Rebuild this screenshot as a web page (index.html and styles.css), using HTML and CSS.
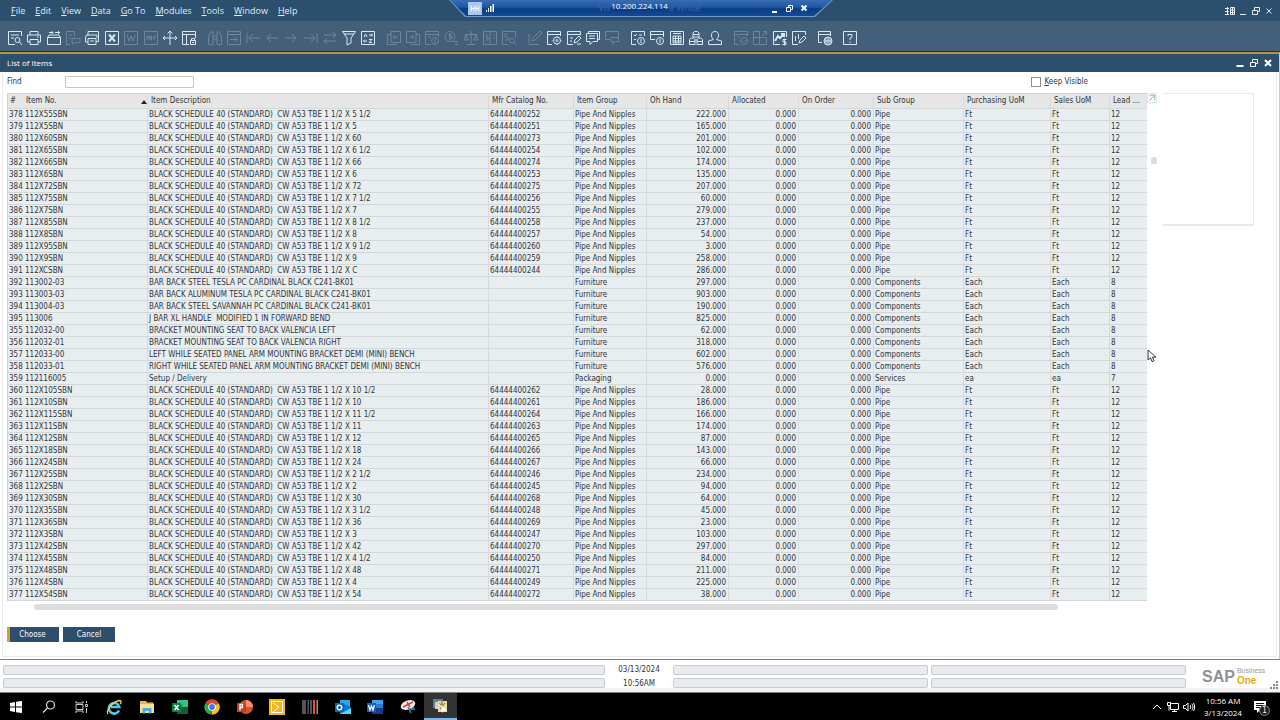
FILE: index.html
```html
<!DOCTYPE html>
<html lang="en">
<head>
<meta charset="utf-8">
<title>SAP Business One - List of Items</title>
<link rel="stylesheet" href="styles.css">
</head>
<body>
<div class="desktop">
  <header class="menubar">
    <nav class="menus">
      <button><u>F</u>ile</button><button><u>E</u>dit</button><button><u>V</u>iew</button><button><u>D</u>ata</button><button><u>G</u>o To</button><button><u>M</u>odules</button><button><u>T</u>ools</button><button><u>W</u>indow</button><button><u>H</u>elp</button>
    </nav>
    <div class="win-controls">
      <button aria-label="Layout"><svg viewBox="0 0 10 10"><path d="M0 2.500h4M0 5.500h4M0 8.500h4M2.500 1v8M5.500 1.500h4v7h-4zM5.500 4h4M5.500 6.500h4M7.500 1.500v7" /></svg></button>
      <button aria-label="Minimize"><svg viewBox="0 0 10 10"><path d="M2 8.500h6"/></svg></button>
      <button aria-label="Restore"><svg viewBox="0 0 10 10"><path d="M1.500 4.500h5v4h-5zM3.500 4V1.500h5v4H7"/></svg></button>
      <button aria-label="Close"><svg viewBox="0 0 10 10"><path d="M2.500 2.500l5 5M7.500 2.500l-5 5"/></svg></button>
    </div>
  </header>

  <div class="remote-bar">
    <div class="remote-shape">
      <span class="remote-pin"><svg viewBox="0 0 14 14"><path d="M3 4v6M3 7h3M6 5v4M8 4v6M8 7h3M11 4v6"/></svg></span>
      <svg class="signal" viewBox="0 0 8 8"><path d="M0 6h1v2H0zM2 4h1v4H2zM4 2h1.500v6H4zM6.500 0H8v8H6.500z"/></svg>
      <span class="remote-title"><span class="remote-ghost left">Vis</span><span class="remote-ip">10.200.224.114</span><span class="remote-ghost">e White</span></span>
      <span class="win-controls remote-controls">
        <button aria-label="Minimize session"><svg viewBox="0 0 10 10"><path class="bold" d="M3 9h5"/></svg></button>
        <button aria-label="Restore session"><svg viewBox="0 0 10 10"><path d="M2.500 4.500h4v4h-4zM4.500 4V2.500h4v4H7"/></svg></button>
        <button aria-label="Close session"><svg viewBox="0 0 10 10"><path class="bold" d="M2.500 2.500l5 5M7.500 2.500l-5 5"/></svg></button>
      </span>
    </div>
  </div>

  <div class="toolbar">
    <div class="tools g10">
      <button aria-label="Preview"><svg viewBox="0 0 16 16"><path d="M14.500 6V1.500h-13v13H8M4 5h8M4 8h3"/><circle cx="10.500" cy="10" r="2.500"/><path d="M12.500 12l2.500 3"/></svg></button>
      <button aria-label="Print"><svg viewBox="0 0 16 16"><path d="M4 5V1.500h8V5M4 12H1.500V5h13v7H12M4 9.500h8v5H4zM11 7h1.500"/></svg></button>
      <button aria-label="Send"><svg viewBox="0 0 16 16"><path d="M1.500 7.500h13v7h-13zM1.500 7.500L3 5h10l1.500 2.500M3 2.500h4M9 2.500h5M5.500 1L7 2.500 5.500 4M12 1l1.500 1.500L12 4"/></svg></button>
      <button disabled aria-label="Copy"><svg viewBox="0 0 16 16"><path d="M5 14.500H1.500v-13h8V6M4 5h3M4 8h2M7 8.500h8v4h-5l-2 2v-2H7z"/></svg></button>
      <button aria-label="Fax"><svg viewBox="0 0 16 16"><path d="M4 5V1.500h10.500v10H12M3 5h10v3M3 4.500L1.500 7v5H4M4 8.500h8v6H4zM6 11h4"/></svg></button>
      <button aria-label="Excel"><svg viewBox="0 0 16 16"><path d="M1.500 1.500h13v13h-13z"/><path class="bold" d="M5 4.500l6 7M11 4.500l-6 7"/></svg></button>
      <button disabled aria-label="Word"><svg viewBox="0 0 16 16"><path d="M1.500 1.500h13v13h-13z"/><path d="M4 5l2 6 2-5 2 5 2-6"/></svg></button>
      <button disabled aria-label="PDF"><svg viewBox="0 0 16 16"><path d="M1.500 1.500h13v13h-13zM4 10V6h1.500v2H4M7 6h1.500v4H7zM11 10V6h2M11 8h1.500"/></svg></button>
      <button aria-label="Launch"><svg viewBox="0 0 16 16"><path d="M8 1v14M1 8h14M5.500 3.500L8 1l2.500 2.500M3 6L1 8l2 2M13 6l2 2-2 2"/></svg></button>
      <button aria-label="Lock screen"><svg viewBox="0 0 16 16"><path d="M8 14.500H1.500v-13h13V8M1.500 4.500h13M5.500 4.500v10M9.500 10.500h5v4h-5zM10.500 10V8.500h3V10M11 12.500h2"/></svg></button>
    </div>
    <div class="tools g9">
      <button disabled aria-label="Find"><svg viewBox="0 0 16 16"><path d="M1.500 7l2-5h2.500v12.500H1.500zM14.500 7l-2-5H10v12.500h4.500zM6 6h4M6 9h4"/></svg></button>
      <button disabled aria-label="Add"><svg viewBox="0 0 16 16"><path d="M1.500 1.500h13v13h-13zM1.500 4.500h13M4 9.500h7M8.500 7L11 9.500 8.500 12"/></svg></button>
      <button disabled aria-label="First"><svg viewBox="0 0 16 16"><path d="M2 3v10M15 8H4M8 4L4 8l4 4"/></svg></button>
      <button disabled aria-label="Previous"><svg viewBox="0 0 16 16"><path d="M14 8H3M7 4L3 8l4 4"/></svg></button>
      <button disabled aria-label="Next"><svg viewBox="0 0 16 16"><path d="M2 8h11M9 4l4 4-4 4"/></svg></button>
      <button disabled aria-label="Last"><svg viewBox="0 0 16 16"><path d="M14 3v10M1 8h11M8 4l4 4-4 4"/></svg></button>
      <button disabled aria-label="Refresh"><svg viewBox="0 0 16 16"><path d="M2 5h12M11 2l3 3-3 3M14 11H2M5 8l-3 3 3 3"/></svg></button>
      <button aria-label="Filter"><svg viewBox="0 0 16 16"><path d="M1.500 1.500h13L10 8v5l-4 2V8zM3 4h10"/></svg></button>
      <button aria-label="Sort"><svg viewBox="0 0 16 16"><path d="M1.500 1.500h13v13h-13z"/><path d="M4 7l1.500-3L7 7M9 5h3.500M11 4l1.500 1L11 6.500M7 11H3.500M5 9.500L3.500 11 5 12.500M9 9.500h3l-3 3h3"/></svg></button>
    </div>
    <div class="tools g7">
      <button disabled aria-label="Base document"><svg viewBox="0 0 16 16"><path d="M5 1.500h9.500v11H5zM5 4.500H1.500v10H11M12 7H7M9 5L7 7l2 2"/></svg></button>
      <button disabled aria-label="Target document"><svg viewBox="0 0 16 16"><path d="M1.500 1.500H11v11H1.500zM11 4.500h3.500v10H5M4 7h5M7 5l2 2-2 2"/></svg></button>
      <button disabled aria-label="Gross profit"><svg viewBox="0 0 16 16"><path d="M7 14.500H1.500v-13h13V7M1.500 4.500h13M4 7h3"/><circle cx="11" cy="11" r="3.500"/><path d="M11 9v4"/></svg></button>
      <button disabled aria-label="Payment means"><svg viewBox="0 0 16 16"><circle cx="7" cy="6.500" r="5"/><path d="M9 4.500H6v2h3v2H6M7 3v7M10 11.500h5M12 14.500h3"/></svg></button>
      <button disabled aria-label="Volume and weight"><svg viewBox="0 0 16 16"><path d="M8 1v13M4 14.500h8M2 4.500h12M3 4.500L1 10h4zM13 4.500L11 10h4z"/></svg></button>
      <button disabled aria-label="Journal"><svg viewBox="0 0 16 16"><path d="M1.500 1.500h13v13h-13zM8 1.500v13M6 5H4v2.500h2V10H4M11 5h2M11 8h2"/></svg></button>
      <button disabled aria-label="Cost search"><svg viewBox="0 0 16 16"><path d="M7 14.500H1.500v-13h13V7M7 4H4v3h3v3H4"/><circle cx="11" cy="10.500" r="2.500"/><path d="M13 12.500l2 2.500"/></svg></button>
    </div>
    <div class="tools g5">
      <button disabled aria-label="Edit"><svg viewBox="0 0 16 16"><path d="M2 4v10.500h10M5 11l1-3 7-7 2 2-7 7z"/></svg></button>
      <button aria-label="Form settings"><svg viewBox="0 0 16 16"><path d="M6 14.500H1.500v-13h13V6M1.500 4.500h13"/><circle cx="11" cy="10.500" r="3.500"/><circle cx="11" cy="10.500" r="1"/><path d="M11 6v1M11 14v1M6.500 10.500h1M14.500 10.500h1"/></svg></button>
      <button aria-label="Layout designer"><svg viewBox="0 0 16 16"><path d="M7 14.500H1.500v-13h13V5M1.500 4.500h13M4 8h3M4 11h2M8 13l1-3 4-4 2 2-4 4zM11 14h4"/></svg></button>
      <button aria-label="Messages"><svg viewBox="0 0 16 16"><path d="M3.500 3.500V1.500h11v8H13M1.500 3.500h11v8H8l-3 3v-3H1.500zM4 6h6M4 8.500h6"/></svg></button>
      <button disabled aria-label="Replies"><svg viewBox="0 0 16 16"><path d="M6 9.500H1.500v-8h13v6M7 7.500h7.500v4H11l-2 3v-3H7z"/></svg></button>
    </div>
    <div class="tools g5">
      <button aria-label="Alerts"><svg viewBox="0 0 16 16"><path d="M6 14.500H1.500v-13h13V6M4 5l1 1 2-2M9 5h3M4 9l1 1 1-1"/><circle cx="11" cy="11" r="3.500"/><path d="M11 9v4"/></svg></button>
      <button aria-label="Information"><svg viewBox="0 0 16 16"><path d="M6 9.500H1.500v-8h13V7M1.500 4.500h13"/><circle cx="11" cy="11" r="3.500"/><path d="M11 9v4"/></svg></button>
      <button aria-label="Calculator"><svg viewBox="0 0 16 16"><path d="M1.500 1.500h13v13h-13zM4 3.500h8M4 6h8v7H4zM6.500 6v7M9.500 6v7M4 8.500h8M4 11h8"/></svg></button>
      <button aria-label="Relationship map"><svg viewBox="0 0 16 16"><path d="M5 7V3l1.500-1.500h3L11 3v4zM1.500 14.500v-5L3 8h2.500L7 9.500v5zM9 14.500v-5L10.500 8H13l1.500 1.500v5zM5 4.500h6M1.500 11.500H7M9 11.500h5.500M7 10h2"/></svg></button>
      <button aria-label="User"><svg viewBox="0 0 16 16"><path d="M8 1.500c5 0 4 6 1.500 8l5 1.500v3.500h-13V11l5-1.500C4 7.500 3 1.500 8 1.500z"/></svg></button>
    </div>
    <div class="tools g4">
      <button disabled aria-label="Schedule"><svg viewBox="0 0 16 16"><path d="M6 14.500H1.500v-13h13V6M1.500 4.500h13M4 7h3"/><circle cx="11" cy="11" r="3.500"/><path d="M9.500 11l1.500 1 2-2"/></svg></button>
      <button disabled aria-label="Widgets"><svg viewBox="0 0 16 16"><path d="M7.500 1.500h-6v13h13v-6M1.500 7.500h13M7.500 1.500v13M10 6l5-5M11 1.500h3.500V5"/></svg></button>
      <button aria-label="Sales analysis"><svg viewBox="0 0 16 16"><path d="M8 14.500H1.500v-13h13V7"/><path class="bold" d="M3 11l3-5 2 2 4-4M9 4h3v3"/><path d="M14.500 9.500H11V12h3v2.500h-3.500M12.500 8.500v7"/></svg></button>
      <button aria-label="Chart editor"><svg viewBox="0 0 16 16"><path d="M7 14.500H1.500v-13h13V5M4.500 6v5M7.500 4v5M8 13l1-3 4-4 2 2-4 4z"/></svg></button>
    </div>
    <div class="tools g1">
      <button aria-label="Browser"><svg viewBox="0 0 16 16"><path d="M5 12.500H1.500v-11h12V6M1.500 4.500h12"/><circle cx="11" cy="11" r="4"/><path d="M7 11h8M11 7v8M9 7.500v7M13 7.500v7"/></svg></button>
    </div>
    <div class="tools g1">
      <button aria-label="Help"><svg viewBox="0 0 16 16"><path d="M1.500 1.500h13v13h-13zM6 6V4.500h4V7L8 8v2M8 11.500V13"/></svg></button>
    </div>
  </div>

  <main class="window">
    <div class="titlebar">
      <h1>List of Items</h1>
      <div class="win-controls">
        <button aria-label="Minimize window"><svg viewBox="0 0 10 10"><path class="bold" d="M1.500 8h7"/></svg></button>
        <button aria-label="Restore window"><svg viewBox="0 0 10 10"><path d="M1.500 4.500h5v4h-5zM3.500 4V1.500h5v4H7"/></svg></button>
        <button aria-label="Close window"><svg viewBox="0 0 10 10"><path class="bold" d="M2 2l6 6M8 2L2 8"/></svg></button>
      </div>
    </div>
    <div class="content">
      <div class="find-row">
        <label for="find">Find</label>
        <input id="find" class="find-box" type="text">
        <label class="keep"><input type="checkbox"><span><u>K</u>eep Visible</span></label>
      </div>
      <div class="list-area">
        <div class="grid-wrap">
          <table class="items">
            <colgroup><col class="c-num"><col class="c-no"><col class="c-desc"><col class="c-mfr"><col class="c-group"><col class="c-hand"><col class="c-alloc"><col class="c-order"><col class="c-sub"><col class="c-purch"><col class="c-sales"><col class="c-lead"></colgroup>
            <thead><tr><th>#</th><th class="sorted">Item No.</th><th>Item Description</th><th>Mfr Catalog No.</th><th>Item Group</th><th>Oh Hand</th><th>Allocated</th><th>On Order</th><th>Sub Group</th><th>Purchasing UoM</th><th>Sales UoM</th><th>Lead ...</th></tr></thead>
            <tbody id="rows"></tbody>
          </table>
          <div class="hscroll"><div class="hthumb"></div></div>
        </div>
        <div class="side">
          <div class="side-tools">
            <button class="expand" aria-label="Expand"><svg viewBox="0 0 10 10"><path d="M2 1.500h6.500V8M8.500 1.500L1.500 8.500"/></svg></button>
            <div class="vthumb"></div>
          </div>
          <div class="side-panel"></div>
        </div>
      </div>
      <div class="actions">
        <button class="action primary">Choose</button><button class="action">Cancel</button>
      </div>
    </div>
  </main>

  <footer class="status">
    <div class="fields wide"><div></div><div></div></div>
    <div class="clock"><span>03/13/2024</span><span>10:56AM</span></div>
    <div class="fields"><div></div><div></div></div>
    <div class="fields"><div></div><div></div></div>
    <div class="brand"><span class="sap">SAP</span><span class="b1"><span class="biz">Business</span><span class="one">One</span></span></div>
    <svg class="grip" viewBox="0 0 8 8"><path d="M6 0h2v2H6zM3 3h2v2H3zM6 3h2v2H6zM0 6h2v2H0zM3 6h2v2H3zM6 6h2v2H6z"/></svg>
  </footer>

  <div class="taskbar">
    <div class="apps">
      <button aria-label="Start"><svg viewBox="0 0 16 16"><path fill="#fff" d="M2 4l5-1v4.500H2zM8 2.800L14 2v5.500H8zM2 8.500h5V13l-5-1zM8 8.500h6V14l-6-.8z"/></svg></button>
      <button aria-label="Search"><svg viewBox="0 0 16 16" fill="none" stroke="#ddd" stroke-width="1.200"><circle cx="9.500" cy="6" r="4"/><path d="M6.500 9L2 13.500"/></svg></button>
      <button aria-label="Task view"><svg viewBox="0 0 16 16" fill="none" stroke="#ccc"><path d="M2 5.500h7v5H2zM2 2v2h7V2M2 14v-2h7v2M12.500 2v2M12.500 9v5M11.500 5.500h2v2h-2z"/></svg></button>
      <button aria-label="Internet Explorer"><svg viewBox="0 0 16 16" fill="none"><path d="M13 11.500A5.300 5.300 0 1 1 13.300 8H5" stroke="#55c4ee" stroke-width="2.600"/><path d="M2 15C-.5 12 7 2 14 1.500c2 .5 1 2.500 0 3.500" stroke="#f2cf4a" stroke-width="1.300"/></svg></button>
      <button aria-label="File Explorer"><svg viewBox="0 0 16 16"><path fill="#e8b93c" d="M1 2h6l1 1.500h6.500V7H1z"/><path fill="#fbe08a" d="M1 5h14v9H1z"/><path fill="#48aee5" d="M3.500 9h9v5.500H10V12H6v2.500H3.500z"/></svg></button>
      <button aria-label="Excel app"><svg viewBox="0 0 16 16"><path fill="#33c481" d="M5 1h11v14H5z"/><path fill="#21a366" d="M5 5h6v5H5z"/><path fill="#185c37" d="M9 8h7v7H5v-4z"/><path fill="#107c41" d="M0 4h9v9H0z"/><path stroke="#fff" stroke-width="1.500" d="M2.500 6l4 5M6.500 6l-4 5"/></svg></button>
      <button aria-label="Chrome"><svg viewBox="0 0 16 16"><path fill="#e44134" d="M8 8L1.300 4.200A7.600 7.600 0 0 1 14.700 4.200z"/><path fill="#fbc116" d="M8 8l6.700-3.800A7.600 7.600 0 0 1 7.500 15.600z"/><path fill="#2da94f" d="M8 8l-.5 7.600A7.600 7.600 0 0 1 1.300 4.200z"/><circle cx="8" cy="8" r="3.800" fill="#fff"/><circle cx="8" cy="8" r="2.900" fill="#3b7ded"/></svg></button>
      <button aria-label="PowerPoint"><svg viewBox="0 0 16 16"><circle cx="9" cy="8" r="7" fill="#d35230"/><path fill="#ff8f6b" d="M9 1a7 7 0 0 1 7 7H9z"/><path fill="#c43e1c" d="M0 4h9v9H0z"/><path fill="none" stroke="#fff" stroke-width="1.300" d="M3 11.500v-6h2.500v3H3"/></svg></button>
      <button aria-label="Notes app"><svg viewBox="0 0 16 16"><path fill="#f5b51c" d="M0 0h16v16H0z"/><path fill="none" stroke="#fff" d="M2.500 2.500h11v11h-11zM4 4l6 4-6 5"/></svg></button>
      <button aria-label="Archive app"><svg viewBox="0 0 16 16"><path fill="#555" d="M0 1h4v14H0zM5.500 1H7v14H5.500zM8 1h2v14H8z"/><path fill="#e5532f" d="M11 1h2v14h-2z"/><path fill="#998" d="M14.500 1H16v14h-1.500z"/></svg></button>
      <button aria-label="Outlook"><svg viewBox="0 0 16 16"><path fill="#28a8ea" d="M5 1h10v9H5z"/><path fill="#0f78c8" d="M9 5l7 3v7H5V9z"/><path fill="#50d9ff" d="M5 15l11-6v6z"/><path fill="#0a64b8" d="M0 4h9v9H0z"/><circle cx="4.500" cy="8.500" r="2.300" fill="none" stroke="#fff" stroke-width="1.400"/></svg></button>
      <button aria-label="Word app"><svg viewBox="0 0 16 16"><path fill="#41a5ee" d="M5 1h11v4H5z"/><path fill="#2b7cd3" d="M5 5h11v4H5z"/><path fill="#103f91" d="M5 9h11v6H5z"/><path fill="#185abd" d="M0 4h9v9H0z"/><path fill="none" stroke="#fff" stroke-width="1.200" d="M1.500 6l1.500 5 1.500-4L6 11l1.500-5"/></svg></button>
      <button aria-label="Snipping Tool"><svg viewBox="0 0 16 16"><ellipse cx="8" cy="6" rx="7.500" ry="4.500" fill="#f3e7e4" transform="rotate(-20 8 6)"/><path stroke="#c9433e" stroke-width="1.500" d="M3 8l10-5M7 3l3 5"/><path fill="none" stroke="#3d87b8" stroke-width="1.400" d="M8 8l3 6M8 10h7M14 8l-3 3"/></svg></button>
      <button class="running" aria-label="Remote session"><svg viewBox="0 0 16 16"><path fill="#5a7f9f" d="M0 1h10v9H0z"/><path fill="#c9d2d6" d="M2 4h8v7H2z"/><path fill="#ecdca0" d="M5 3h9v11H5z"/><path fill="none" stroke="#7b6430" d="M6.500 5l6 7M12 5l-5 6M9 3v4"/><path fill="#fff" d="M8 7l6 5-3 .5L9.500 15z"/></svg></button>
    </div>
    <div class="tray">
      <button class="ti" aria-label="Hidden icons"><svg viewBox="0 0 12 12"><path d="M2 8l4-4 4 4"/></svg></button>
      <button class="ti" aria-label="Network"><svg viewBox="0 0 12 12"><path d="M3.500 2.500h8v6h-8zM5 10.500h5M7.500 8.500v2M.5 1.500h3v3h-3zM2 4.500v5"/></svg></button>
      <button class="ti" aria-label="Volume"><svg viewBox="0 0 12 12"><path d="M.5 4.500h2L5 2v8L2.500 7.500h-2zM7 4c1 1 1 3 0 4M8.800 2.800c1.600 2 1.600 4.400 0 6.400M10.500 2c1.500 2.500 1.500 5.500 0 8"/></svg></button>
      <div class="time"><span>10:56 AM</span><span>3/13/2024</span></div>
      <button class="notify" aria-label="Notifications"><svg viewBox="0 0 12 12"><path fill="#fff" d="M0 0h12v9H6l-3 3V9H0z"/><path stroke="#111" d="M2 2.500h8M2 4.500h8M2 6.500h5"/></svg><span class="badge">1</span></button>
    </div>
  </div>
  <svg class="pointer" viewBox="0 0 10 14"><path d="M1 1v10l2.500-2.200L5 12.500l2-.8-1.600-3.500H9z"/></svg>
</div>
<script src="app.js"></script>
</body>
</html>
```
FILE: styles.css
```css
* { box-sizing: border-box; }
body {
  margin: 0;
  background: #fff;
  color: #303438;
  font: 8px/12px "DejaVu Sans Condensed", "DejaVu Sans", "Noto Sans", sans-serif;
}
button {
  margin: 0;
  padding: 0;
  border: 0;
  background: none;
  color: inherit;
  font: inherit;
}
.desktop {
  position: relative;
  display: flex;
  flex-direction: column;
  min-height: 100vh;
}

/* Menu bar */
.menubar {
  display: flex;
  justify-content: space-between;
  align-items: center;
  height: 21px;
  padding: 0 6px 0 11px;
  background: #2b4f6c;
  color: #e4ebf1;
  font: 9px/20px "Open Sans", "Noto Sans", sans-serif;
}
.menus { display: flex; gap: 10px; }
u { text-underline-offset: 1px; }
.win-controls { display: flex; gap: 3px; }
.win-controls button { display: flex; }
.win-controls svg {
  width: 10px;
  height: 10px;
  fill: none;
  stroke: currentColor;
}
.win-controls .bold { stroke-width: 2; }

/* Remote session bar over the menu bar */
.remote-bar {
  position: absolute;
  top: 0;
  left: 50%;
  width: 384px;
  height: 17px;
  margin-left: -191px;
  background: #6f9bd0;
  clip-path: polygon(0 0, 100% 0, 366px 100%, 16px 100%);
}
.remote-shape {
  display: flex;
  align-items: center;
  height: 16px;
  padding: 0 24px 0 19px;
  background: linear-gradient(#3a6db0, #1c57a5 45%, #0a3b86 55%, #134a94);
  clip-path: polygon(1px 0, 383px 0, 365px 100%, 17px 100%);
  color: #fff;
}
.remote-pin { display: flex; width: 14px; height: 13px; background: #abc8ea; }
.remote-pin svg { width: 14px; fill: none; stroke: #fff; }
.signal { width: 8px; height: 8px; margin-left: 4px; fill: #fff; }
.remote-title {
  flex: 1;
  display: grid;
  grid-template-columns: 1fr auto 1fr;
  gap: 1px;
  margin-left: 16px;
}
.remote-ip { font: 8px/14px "Open Sans", sans-serif; }
.remote-ghost { color: #3a66a3; font: 9px/18px "Noto Sans", sans-serif; }
.remote-ghost.left { text-align: right; }
.remote-controls { gap: 5px; }

/* Toolbar */
.toolbar {
  display: flex;
  gap: 6px;
  height: 31px;
  padding: 4px 5px 0;
  background: #435f79;
  border-bottom: 1px solid #20303e;
}
.tools { display: flex; }
.tools button {
  flex: 1;
  display: flex;
  justify-content: center;
  align-items: center;
  color: #d8e8f4;
}
.tools button:disabled { color: #6e8699; }
.tools svg { width: 16px; height: 16px; fill: none; stroke: currentColor; }
.tools .bold { stroke-width: 2; }
.g10 { width: 194px; }
.g9 { width: 173px; }
.g7 { width: 135px; }
.g5 { width: 97px; }
.g4 { width: 78px; }
.g1 { width: 19px; }

/* Window */
.window {
  flex: 1;
  display: flex;
  flex-direction: column;
  border-top: 2px solid #b8953a;
  border-right: 1px solid #c8ccd0;
}
.titlebar {
  display: flex;
  justify-content: space-between;
  align-items: center;
  height: 18px;
  padding: 0 6px 0 7px;
  background: #2c506c;
  color: #fff;
}
.titlebar .win-controls { gap: 4px; }
.titlebar h1 { margin: 0; font: 8px/16px "Open Sans", sans-serif; }
.content {
  flex: 1;
  margin: 0 2px 2px;
  padding: 3px 0 0 4px;
  border: solid #e8eaed;
  border-width: 0 1px 1px;
}
.find-row { display: flex; align-items: center; height: 13px; }
.find-row > label:first-child { width: 58px; }
.find-box {
  width: 129px;
  height: 12px;
  padding: 0 2px;
  border: 1px solid #cdc5b2;
  border-radius: 1px;
  background: #fff;
  font: inherit;
}
.keep { display: flex; align-items: center; gap: 3px; margin: 0 188px 0 auto; }
.keep input {
  appearance: none;
  width: 10px;
  height: 10px;
  margin: 0;
  border: 1px solid #8d8f84;
  background: #fff;
}
.list-area { display: flex; margin-top: 5px; }
.grid-wrap { flex: 1; min-width: 0; }
.items {
  width: 100%;
  table-layout: fixed;
  border-collapse: separate;
  border-spacing: 0;
  border-left: 1px solid #cfd3d6;
}
.c-num { width: 16px; }
.c-no { width: 124px; }
.c-mfr { width: 85px; }
.c-group { width: 73px; }
.c-hand { width: 82px; }
.c-alloc { width: 70px; }
.c-order { width: 75px; }
.c-sub { width: 90px; }
.c-purch { width: 87px; }
.c-sales { width: 59px; }
.c-lead { width: 37px; }
.items th {
  height: 16px;
  padding: 0 3px 1px;
  border-top: 1px solid #d6d6d6;
  border-right: 1px solid #dadada;
  border-bottom: 1px solid #d2d7da;
  background: #e6e6e6;
  font-weight: normal;
  text-align: left;
  white-space: nowrap;
}
.items th:first-child { padding: 0 2px 1px; border-right-color: #e6e6e6; }
.items th.sorted { padding: 0 0 1px 2px; }
.sorted::after {
  content: "";
  float: right;
  margin: 5px 0 0;
  border: solid transparent;
  border-width: 0 3px 4px;
  border-bottom-color: #222;
}
.items td {
  height: 12px;
  padding: 0 1px;
  border-right: 1px solid #d4dadd;
  border-bottom: 1px solid #d2d7da;
  background: #e8edf0;
  line-height: 11px;
  white-space: pre;
}
.items tr > :last-child { border-right: 0; }
.items td:first-child { border-right-color: #e8edf0; }
.items td:nth-child(n+6):nth-child(-n+8) { padding-right: 2px; text-align: right; }
.hscroll { padding: 3px 0 0 27px; }
.hthumb { width: 92%; height: 6px; border-radius: 3px; background: #dcdcdc; }
.side { display: flex; width: 129px; }
.side-tools { width: 16px; }
.expand { display: flex; border: 1px solid #dfe8ec; }
.expand svg { width: 8px; height: 8px; fill: none; stroke: #6f98ae; }
.vthumb {
  width: 6px;
  height: 7px;
  margin: 54px 0 0 4px;
  border-radius: 2px;
  background: #dcdcdc;
}
.side-panel {
  width: 91px;
  height: 133px;
  border: solid #e6e8ea;
  border-width: 1px 1px 2px 0;
}
.actions { display: flex; gap: 4px; margin-top: 17px; }
.action {
  width: 52px;
  height: 15px;
  background: #2b4f6c;
  color: #fff;
}
.primary { padding-right: 4px; border-left: 3px solid #d3a02a; }

/* Status bar */
.status {
  position: relative;
  display: flex;
  gap: 3px;
  height: 34px;
  padding: 5px 15px 0 3px;
  border: solid #7d8186;
  border-width: 1px 0 1px;
  box-shadow: inset 0 -4px #f2f3f4;
}
.fields { flex: 255; display: flex; flex-direction: column; gap: 3px; }
.fields.wide { flex: 602; }
.fields div {
  height: 10px;
  border: 1px solid #c6cbd0;
  border-radius: 2px;
  background: #e8ecef;
}
.clock {
  display: flex;
  flex-direction: column;
  gap: 2px;
  width: 62px;
  align-items: center;
  line-height: 12px;
  margin-top: -1px;
}
.brand {
  display: flex;
  align-items: center;
  gap: 2px;
  width: 76px;
  padding: 0 0 4px 13px;
}
.sap { color: #8e9092; font: bold 16px/16px "Liberation Sans", sans-serif; }
.b1 { display: flex; flex-direction: column; }
.biz { color: #999; font: 7px/8px "Liberation Sans", sans-serif; }
.one { color: #f0ab00; font: bold 10px/12px "Liberation Sans", sans-serif; }
.grip { position: absolute; right: 2px; bottom: 3px; width: 8px; height: 8px; fill: #888; }

/* Taskbar */
.taskbar {
  display: flex;
  justify-content: space-between;
  height: 27px;
  background: #000;
  color: #fff;
}
.apps { display: flex; width: 457px; }
.apps button { flex: 1; display: flex; justify-content: center; align-items: center; }
.apps svg { width: 16px; height: 16px; }
.apps .running { background: #333; border-bottom: 2px solid #76b9ed; }
.tray { display: flex; align-items: center; gap: 4px; padding-right: 12px; }
.ti { display: flex; }
.ti svg { width: 12px; height: 12px; fill: none; stroke: #fff; }
.time {
  display: flex;
  flex-direction: column;
  align-items: center;
  width: 42px;
  margin-left: 3px;
  font: 8px/12px "Open Sans", sans-serif;
}
.notify { position: relative; display: flex; margin: 0 2px 0 6px; }
.notify svg { width: 12px; height: 12px; }
.badge {
  position: absolute;
  left: 5px;
  top: 4px;
  width: 11px;
  height: 11px;
  border: 1px solid #888;
  border-radius: 50%;
  background: #222;
  line-height: 9px;
}
.pointer {
  position: absolute;
  left: 1147px;
  top: 349px;
  width: 10px;
  height: 14px;
  fill: #fff;
  stroke: #333;
}
```
FILE: app.js
```js
// Pipe rows: line number | size code | last digits of the catalog no. | size label | on hand
const pipesAfter = `378|55|252|5 1/2|222
379|5|251|5|165
380|60|273|60|201
381|65|254|6 1/2|102
382|66|274|66|174
383|6|253|6|135
384|72|275|72|207
385|75|256|7 1/2|60
386|7|255|7|279
387|85|258|8 1/2|237
388|8|257|8|54
389|95|260|9 1/2|3
390|9|259|9|258
391|C|244|C|286`;
const pipesBefore = `360|105|262|10 1/2|28
361|10|261|10|186
362|115|264|11 1/2|166
363|11|263|11|174
364|12|265|12|87
365|18|266|18|143
366|24|267|24|66
367|25|246|2 1/2|234
368|2|245|2|94
369|30|268|30|64
370|35|248|3 1/2|45
371|36|269|36|23
372|3|247|3|103
373|42|270|42|297
374|45|250|4 1/2|84
375|48|271|48|211
376|4|249|4|225
377|54|272|54|38`;
const others = `392|113002-03|BAR BACK STEEL TESLA PC CARDINAL BLACK C241-BK01|297
393|113003-03|BAR BACK ALUMINUM TESLA PC CARDINAL BLACK C241-BK01|903
394|113004-03|BAR BACK STEEL SAVANNAH PC CARDINAL BLACK C241-BK01|190
395|113006|J BAR XL HANDLE  MODIFIED 1 IN FORWARD BEND|825
355|112032-00|BRACKET MOUNTING SEAT TO BACK VALENCIA LEFT|62
356|112032-01|BRACKET MOUNTING SEAT TO BACK VALENCIA RIGHT|318
357|112033-00|LEFT WHILE SEATED PANEL ARM MOUNTING BRACKET DEMI (MINI) BENCH|602
358|112033-01|RIGHT WHILE SEATED PANEL ARM MOUNTING BRACKET DEMI (MINI) BENCH|576`;

const split = text => text.split("\n").map(line => line.split("|"));
const pipe = ([n, code, cat, size, hand]) => [
  n, `112X${code}SBN`, `BLACK SCHEDULE 40 (STANDARD)  CW A53 TBE 1 1/2 X ${size}`,
  `64444400${cat}`, "Pipe And Nipples", `${hand}.000`, "0.000", "0.000", "Pipe", "Ft", "Ft", "12"];
const furniture = ([n, no, desc, hand]) => [
  n, no, desc, "", "Furniture", `${hand}.000`, "0.000", "0.000", "Components", "Each", "Each", "8"];

const rows = [
  ...split(pipesAfter).map(pipe),
  ...split(others).map(furniture),
  ["359", "112116005", "Setup / Delivery", "", "Packaging", "0.000", "0.000", "0.000", "Services", "ea", "ea", "7"],
  ...split(pipesBefore).map(pipe)
];

const body = document.getElementById("rows");
for (const row of rows) {
  const tr = body.insertRow();
  for (const value of row) tr.insertCell().textContent = value;
}
```
